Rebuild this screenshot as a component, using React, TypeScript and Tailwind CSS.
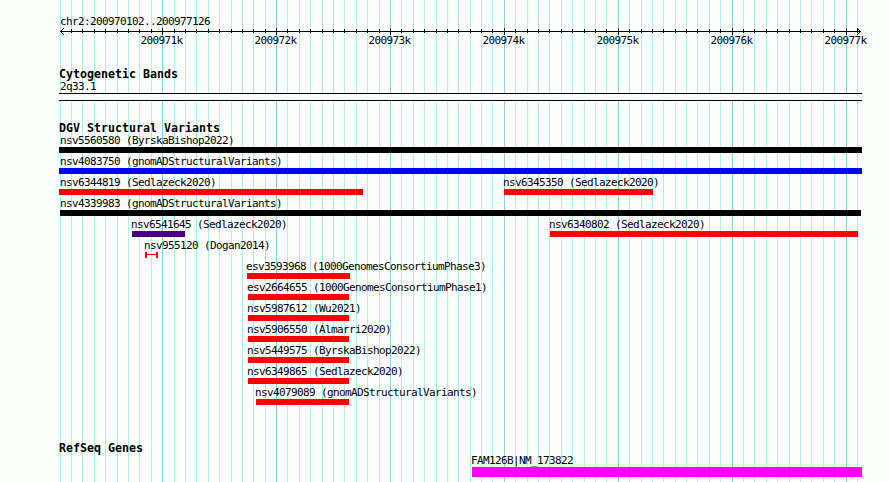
interface Feature {
  name: string
  x: number
  width: number
  color: string
  kind?: 'box' | 'span'
}

const REGION_START = 200970102
const REGION_END = 200977126
const PAD_LEFT = 59.9
const SCALE = 800 / (REGION_END - REGION_START)

// One line for every 100 bp, a darker one for every 1000 bp
const ticks = Array.from({ length: 71 }, (_, i) => {
  const pos = 200970100 + i * 100
  return { pos, x: Math.round(PAD_LEFT + (pos - REGION_START) * SCALE), major: pos % 1000 === 0 }
})

const lanes: Feature[][] = [
  [{ name: 'nsv5560580 (ByrskaBishop2022)', x: 59, width: 803, color: 'bg-black' }],
  [{ name: 'nsv4083750 (gnomADStructuralVariants)', x: 59, width: 803, color: 'bg-[#0000ff]' }],
  [
    { name: 'nsv6344819 (Sedlazeck2020)', x: 59, width: 304, color: 'bg-[#ff0000]' },
    { name: 'nsv6345350 (Sedlazeck2020)', x: 504, width: 149, color: 'bg-[#ff0000]' },
  ],
  [{ name: 'nsv4339983 (gnomADStructuralVariants)', x: 60, width: 801, color: 'bg-black' }],
  [
    { name: 'nsv6541645 (Sedlazeck2020)', x: 132, width: 53, color: 'bg-[#4b0082]' },
    { name: 'nsv6340802 (Sedlazeck2020)', x: 550, width: 308, color: 'bg-[#ff0000]' },
  ],
  [{ name: 'nsv955120 (Dogan2014)', x: 145, width: 13, color: 'bg-[#ff0000]', kind: 'span' }],
  [{ name: 'esv3593968 (1000GenomesConsortiumPhase3)', x: 247, width: 103, color: 'bg-[#ff0000]' }],
  [{ name: 'esv2664655 (1000GenomesConsortiumPhase1)', x: 248, width: 101, color: 'bg-[#ff0000]' }],
  [{ name: 'nsv5987612 (Wu2021)', x: 248, width: 101, color: 'bg-[#ff0000]' }],
  [{ name: 'nsv5906550 (Almarri2020)', x: 248, width: 101, color: 'bg-[#ff0000]' }],
  [{ name: 'nsv5449575 (ByrskaBishop2022)', x: 248, width: 101, color: 'bg-[#ff0000]' }],
  [{ name: 'nsv6349865 (Sedlazeck2020)', x: 248, width: 101, color: 'bg-[#ff0000]' }],
  [{ name: 'nsv4079089 (gnomADStructuralVariants)', x: 256, width: 93, color: 'bg-[#ff0000]' }],
]

const small = 'block whitespace-pre text-[11px] tracking-[-0.62px] leading-[12px]'

function GridLines() {
  return (
    <svg className="absolute inset-0" width="890" height="482" shapeRendering="crispEdges">
      {ticks.map((t) => (
        <rect key={t.pos} x={t.x} y="0" width="1" height="482" fill={t.major ? '#87ceeb' : '#afeeee'} />
      ))}
    </svg>
  )
}

function Ruler() {
  return (
    <svg className="block" width="890" height="22" shapeRendering="crispEdges">
      <rect x="60" y="4" width="801" height="1" />
      {ticks.slice(1).map((t) => (
        <rect key={t.pos} x={t.x} y={t.major ? 1 : 2} width="1" height={t.major ? 7 : 4} />
      ))}
      <path d="M60 4h1v1h-1zM61 3h1v1h-1zM62 2h1v1h-1zM63 1h1v1h-1zM61 5h1v1h-1zM62 6h1v1h-1zM63 7h1v1h-1z" />
      <path d="M860 4h1v1h-1zM859 3h1v1h-1zM858 2h1v1h-1zM857 1h1v1h-1zM859 5h1v1h-1zM858 6h1v1h-1zM857 7h1v1h-1z" />
      {ticks.filter((t) => t.major).map((t) => (
        <text key={t.pos} x={t.x - 21.5} y="17" className="text-[11px] tracking-[-0.62px]">
          {`${t.pos / 1000}k`}
        </text>
      ))}
    </svg>
  )
}

function Heading({ children }: { children: string }) {
  return <h2 className="ml-[59px] h-[13px] whitespace-pre text-[11.63px] font-bold leading-[12px]">{children}</h2>
}

function FeatureGlyph({ feature }: { feature: Feature }) {
  // labels start one pixel before the glyph but never left of the panel
  const labelShift = Math.max(feature.x - 1, 60) - feature.x
  return (
    <div className="col-start-1 row-start-1 w-0" style={{ marginLeft: feature.x }}>
      <span className={`${small} h-[12px]`} style={{ marginLeft: labelShift }}>{feature.name}</span>
      {feature.kind === 'span' ? (
        <div className="flex h-[6px]" style={{ width: feature.width }}>
          <div className={`h-full w-[2px] ${feature.color}`} />
          <div className={`mt-[2px] h-px flex-1 ${feature.color}`} />
          <div className={`h-full w-[2px] ${feature.color}`} />
        </div>
      ) : (
        <div className={`h-[6px] ${feature.color}`} style={{ width: feature.width }} />
      )}
    </div>
  )
}

export default function App() {
  return (
    <div className="relative h-[482px] w-[890px] overflow-hidden bg-[#fdfffc] font-['DejaVu_Sans_Mono',monospace] text-black">
      <GridLines />
      <div className="relative flex h-full flex-col pt-[16px]">
        <div className={`${small} ml-[60px] h-[11px]`}>chr2:200970102..200977126</div>
        <Ruler />

        <section className="mt-[19px]">
          <Heading>Cytogenetic Bands</Heading>
          <div className={`${small} ml-[60px] h-[12px]`}>2q33.1</div>
          <div className="ml-[59px] h-[8px] w-[803px] border-y border-black bg-[#fdfffc]" />
        </section>

        <section className="mt-[21px]">
          <Heading>DGV Structural Variants</Heading>
          {lanes.map((lane) => (
            <div key={lane[0].name} className="mb-[2px] grid h-[19px]">
              {lane.map((f) => <FeatureGlyph key={f.name} feature={f} />)}
            </div>
          ))}
        </section>

        <section className="mt-[34px]">
          <Heading>RefSeq Genes</Heading>
          <div className="ml-[472px]">
            <div className={`${small} -ml-px h-[12px]`}>FAM126B|NM_173822</div>
            <div className="h-[10px] w-[390px] bg-[#ff00ff]" />
          </div>
        </section>
      </div>
    </div>
  )
}
